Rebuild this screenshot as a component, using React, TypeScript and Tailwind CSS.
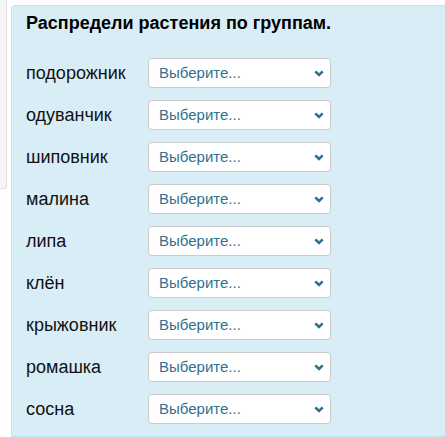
const plants = [
  'подорожник',
  'одуванчик',
  'шиповник',
  'малина',
  'липа',
  'клён',
  'крыжовник',
  'ромашка',
  'сосна',
]

function Chevron() {
  return (
    <svg width="10" height="7" viewBox="0 0 10 7" className="shrink-0">
      <path d="M1.3 1.3L5 5l3.7-3.7" fill="none" stroke="#31708f" strokeWidth="2.6" />
    </svg>
  )
}

export default function App() {
  return (
    <div
      className="flex w-[445px] h-[437px] overflow-hidden bg-white"
      style={{ fontFamily: '"Liberation Sans", Arial, sans-serif' }}
    >
      <div className="w-[7px] h-[189px] shrink-0 bg-[#f5f5f5] border-r border-b border-[#e3e3e3] rounded-br-[3px]" />
      <div className="ml-[4px] mt-[5px] flex-1 -mr-4 bg-[#d9edf7] border border-[#bce8f1] rounded-tl-[4px] pl-[14px] pt-[7px]">
        <h2 className="text-[18px] font-bold text-black leading-[20px]">Распредели растения по группам.</h2>
        <div className="mt-[25px] flex flex-col gap-[12px]">
          {plants.map((p) => (
            <div key={p} className="flex items-center h-[30px]">
              <span className="w-[122px] text-[18px] text-[#111]">{p}</span>
              <div className="w-[183px] h-[30px] bg-white border border-[#ccc] rounded-[4px] flex items-center justify-between pl-[10px] pr-[6px]">
                <span className="text-[15px] text-[#31708f]">Выберите...</span>
                <Chevron />
              </div>
            </div>
          ))}
        </div>
      </div>
    </div>
  )
}
